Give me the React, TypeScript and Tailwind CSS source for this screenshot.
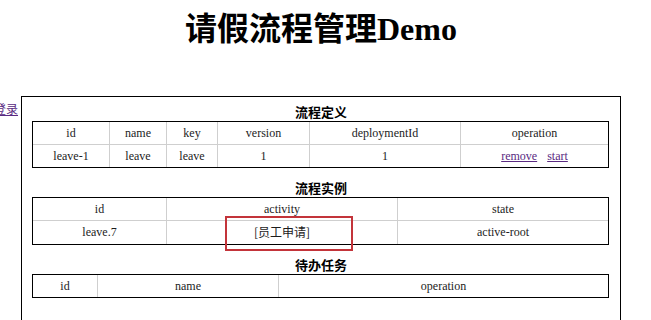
import clsx from "clsx";

type Tbl = {
  title: string;
  cols: string[];
  head: string[];
  rows: React.ReactNode[][];
};

const serif = "font-['Liberation_Serif','Noto_Sans_CJK_SC',serif]";

const tables: Tbl[] = [
  {
    title: "流程定义",
    cols: ["w-[76px]", "w-[57px]", "w-[51px]", "w-[92px]", "w-[151px]", "flex-1"],
    head: ["id", "name", "key", "version", "deploymentId", "operation"],
    rows: [
      [
        "leave-1",
        "leave",
        "leave",
        "1",
        "1",
        <span className="text-[#5a2a82]">
          <a href="#" className="underline">remove</a>
          <span className="inline-block w-[10px]" />
          <a href="#" className="underline">start</a>
        </span>,
      ],
    ],
  },
  {
    title: "流程实例",
    cols: ["w-[133px]", "w-[231px]", "flex-1"],
    head: ["id", "activity", "state"],
    rows: [
      [
        "leave.7",
        <span className="font-['Noto_Sans_CJK_SC',sans-serif] text-[12px]">[员工申请]</span>,
        "active-root",
      ],
    ],
  },
  {
    title: "待办任务",
    cols: ["w-[64px]", "w-[181px]", "flex-1"],
    head: ["id", "name", "operation"],
    rows: [],
  },
];

const Section = ({ t }: { t: Tbl }) => (
  <div className="mb-[11px]">
    <h3 className="text-center text-[13px] leading-[18px] font-bold font-['Noto_Sans_CJK_SC',sans-serif] text-black">
      {t.title}
    </h3>
    <div className="ml-[10px] w-[577px] border border-black">
      {[t.head, ...t.rows].map((r, ri) => (
        <div key={ri} className={clsx("flex", ri > 0 && "border-t border-[#cfcfcf]")}>
          {r.map((c, ci) => (
            <div
              key={ci}
              className={clsx(
                t.cols[ci],
                "text-center text-[12px] leading-[22px] text-[#1c1c1c]",
                serif,
                ci > 0 && "border-l border-[#cfcfcf]"
              )}
            >
              {c}
            </div>
          ))}
        </div>
      ))}
    </div>
  </div>
);

export default function App() {
  return (
    <div className="relative w-[651px] h-[320px] overflow-hidden bg-white">
      <h1
        className={clsx(
          "w-[642px] pt-[9px] text-center text-[32px] leading-[40px] font-bold text-black",
          serif
        )}
      >
        请假流程管理Demo
      </h1>
      <div className="mt-[47px] flex items-start">
        <a
          href="#"
          className="-ml-[6px] mr-[3px] mt-[5px] text-[12px] leading-[16px] text-[#5a2a82] underline font-['Noto_Sans_CJK_SC',sans-serif]"
        >
          登录
        </a>
        <div className="w-[600px] h-[300px] border border-black pt-[6px]">
          {tables.map((t) => (
            <Section key={t.title} t={t} />
          ))}
        </div>
      </div>
      <div className="absolute left-[225px] top-[216px] w-[128px] h-[35px] border-2 border-[#c3343a]" />
    </div>
  );
}
